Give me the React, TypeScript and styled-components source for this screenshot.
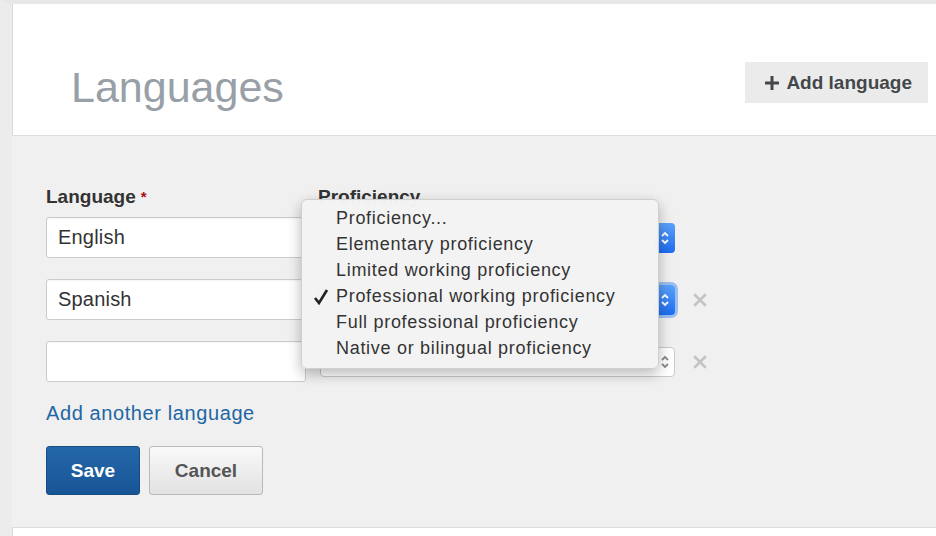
import styled, { createGlobalStyle, css } from 'styled-components';

const GlobalStyle = createGlobalStyle`
    html, body {
        margin: 0;
        padding: 0;
        background: #ffffff;
    }
    body {
        font-family: "Liberation Sans", Arial, sans-serif;
        color: #333333;
    }
`;

const Page = styled.div`
    width: 936px;
    height: 536px;
    box-sizing: border-box;
    display: flex;
    flex-direction: column;
    background: #ffffff;
    border-top: 4px solid #e7e7e7;
    border-left: 12px solid #ececec;
    box-shadow: inset 1px 0 0 #d9d9d9;
    overflow: hidden;
`;

const Header = styled.div`
    height: 132px;
    box-sizing: border-box;
    display: flex;
    justify-content: space-between;
    align-items: flex-start;
    padding: 58px 8px 0 59px;
    border-bottom: 1px solid #dedede;
`;

const Title = styled.h1`
    margin: 0;
    font-size: 43px;
    line-height: 50px;
    font-weight: 400;
    color: #989fa7;
`;

const AddButton = styled.button`
    height: 41px;
    padding: 0 16px 0 19px;
    display: flex;
    align-items: center;
    gap: 6px;
    border: none;
    background: #ebebeb;
    font-family: inherit;
    font-size: 19px;
    font-weight: 700;
    color: #44474a;
`;

const Body = styled.div`
    background: #f0f0f0;
    padding: 50px 34px 32px 34px;
    border-bottom: 1px solid #dcdcdc;
`;

const Grid = styled.div`
    display: grid;
    grid-template-columns: 260px 355px 40px;
    column-gap: 14px;
    row-gap: 21px;
    align-items: center;
`;

const Label = styled.div`
    font-size: 19px;
    line-height: 22px;
    font-weight: 700;
    color: #333;
    margin-bottom: -12px;

    span {
        color: #a11;
        font-size: 15px;
        vertical-align: top;
        margin-left: 5px;
    }
`;

const ProfLabel = styled(Label)`
    margin-left: -2px;
`;

const TextInput = styled.div`
    height: 41px;
    box-sizing: border-box;
    border: 1px solid #cbcbcb;
    border-radius: 3px;
    background: #fff;
    padding: 0 11px;
    display: flex;
    align-items: center;
    font-size: 20px;
    letter-spacing: 0.2px;
    color: #333;
    box-shadow: inset 0 1px 1px rgba(0, 0, 0, 0.04);
`;

const SelectCell = styled.div`
    position: relative;
`;

const Select = styled.div<{ focused?: boolean }>`
    height: 30px;
    box-sizing: border-box;
    border: 1px solid #c9c9c9;
    border-radius: 4px;
    background: #fff;
    display: flex;
    align-items: center;
    justify-content: flex-end;
    ${({ focused }) =>
        focused &&
        css`
            box-shadow: 0 0 0 3px rgba(86, 152, 238, 0.55);
        `}
`;

const Stepper = styled.div<{ active?: boolean }>`
    width: 20px;
    height: 30px;
    margin: -1px -1px -1px 0;
    border-radius: 0 4px 4px 0;
    display: flex;
    align-items: center;
    justify-content: center;
    background: ${({ active }) => (active ? 'linear-gradient(#5aa2fb, #1d6cef)' : 'transparent')};
    color: ${({ active }) => (active ? '#ffffff' : '#8a8a8a')};
`;

const Remove = styled.div`
    display: flex;
    align-items: center;
    padding-left: 4px;
    color: #c3c3c3;
`;

const Menu = styled.div`
    position: absolute;
    left: -19px;
    top: -86px;
    width: 358px;
    box-sizing: border-box;
    padding: 6px 0;
    background: rgba(243, 243, 243, 0.98);
    border: 1px solid #cfcfcf;
    border-radius: 6px;
    box-shadow: 0 5px 14px rgba(0, 0, 0, 0.28);
    z-index: 5;
`;

const MenuItem = styled.div`
    position: relative;
    height: 26px;
    display: flex;
    align-items: center;
    padding-left: 34px;
    font-size: 18px;
    letter-spacing: 0.7px;
    color: #333;

    svg {
        position: absolute;
        left: 11px;
        top: 5px;
    }
`;

const AddAnother = styled.a`
    display: block;
    width: max-content;
    margin-top: 19px;
    font-size: 20px;
    line-height: 24px;
    letter-spacing: 0.6px;
    color: #2266a3;
    text-decoration: none;
`;

const Actions = styled.div`
    margin-top: 21px;
    display: flex;
    gap: 9px;
`;

const Button = styled.button<{ primary?: boolean }>`
    height: 49px;
    box-sizing: border-box;
    padding: 0;
    border-radius: 3px;
    font-family: inherit;
    font-size: 19px;
    font-weight: 700;
    ${({ primary }) =>
        primary
            ? css`
                  width: 94px;
                  color: #fff;
                  border: 1px solid #154c83;
                  background: linear-gradient(#2467a9, #185596);
              `
            : css`
                  width: 114px;
                  color: #555;
                  border: 1px solid #b9b9b9;
                  background: linear-gradient(#f9f9f9, #e2e2e2);
              `}
`;

const Spacer = styled.div``;

const Chevrons = () => (
    <svg width="10" height="16" viewBox="0 0 10 16" fill="none" stroke="currentColor" strokeWidth="1.8">
        <path d="M2 6 L5 3 L8 6" />
        <path d="M2 10 L5 13 L8 10" />
    </svg>
);

const Cross = () => (
    <svg width="14" height="14" viewBox="0 0 14 14" stroke="currentColor" strokeWidth="2.6" strokeLinecap="round">
        <path d="M2 2 L12 12 M12 2 L2 12" />
    </svg>
);

const Check = () => (
    <svg width="16" height="16" viewBox="0 0 16 16" fill="none" stroke="#222" strokeWidth="2.6">
        <path d="M2 9 L6 14 L14 1" />
    </svg>
);

const options = [
    'Proficiency...',
    'Elementary proficiency',
    'Limited working proficiency',
    'Professional working proficiency',
    'Full professional proficiency',
    'Native or bilingual proficiency',
];

export default function App() {
    return (
        <>
            <GlobalStyle />
            <Page>
                <Header>
                    <Title>Languages</Title>
                    <AddButton>
                        <svg width="16" height="16" viewBox="0 0 16 16" stroke="#44474a" strokeWidth="3">
                            <path d="M8 1 V15 M1 8 H15" />
                        </svg>
                        Add language
                    </AddButton>
                </Header>
                <Body>
                    <Grid>
                        <Label>
                            Language<span>*</span>
                        </Label>
                        <ProfLabel>Proficiency</ProfLabel>
                        <Spacer />

                        <TextInput>English</TextInput>
                        <SelectCell>
                            <Select>
                                <Stepper active>
                                    <Chevrons />
                                </Stepper>
                            </Select>
                        </SelectCell>
                        <Spacer />

                        <TextInput>Spanish</TextInput>
                        <SelectCell>
                            <Select focused>
                                <Stepper active>
                                    <Chevrons />
                                </Stepper>
                            </Select>
                            <Menu>
                                {options.map((o) => (
                                    <MenuItem key={o}>
                                        {o === 'Professional working proficiency' && <Check />}
                                        {o}
                                    </MenuItem>
                                ))}
                            </Menu>
                        </SelectCell>
                        <Remove>
                            <Cross />
                        </Remove>

                        <TextInput />
                        <SelectCell>
                            <Select>
                                <Stepper>
                                    <Chevrons />
                                </Stepper>
                            </Select>
                        </SelectCell>
                        <Remove>
                            <Cross />
                        </Remove>
                    </Grid>
                    <AddAnother href="#">Add another language</AddAnother>
                    <Actions>
                        <Button primary>Save</Button>
                        <Button>Cancel</Button>
                    </Actions>
                </Body>
            </Page>
        </>
    );
}
